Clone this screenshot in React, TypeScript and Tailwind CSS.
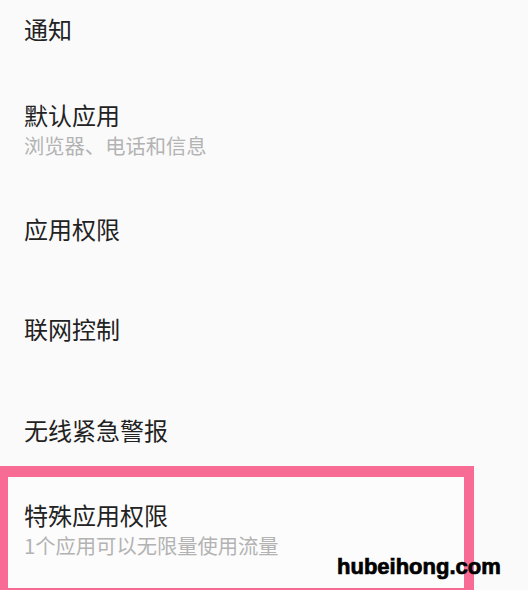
import React from 'react';

const font = { fontFamily: '"Noto Sans CJK SC", "Noto Sans", sans-serif' };

function Row({ title, sub, h }: { title: string; sub?: string; h: string }) {
  return (
    <div className={`flex flex-col justify-center pl-6 ${h}`}>
      <div className="text-[24px] leading-[32px] text-[#222222]">{title}</div>
      {sub && <div className="text-[20.3px] leading-[28px] text-[#b3b3b3]">{sub}</div>}
    </div>
  );
}

export default function App() {
  return (
    <div className="relative h-[590px] w-[528px] overflow-hidden bg-[#fafafa]" style={font}>
      <Row title="通知" h="h-[79px] pb-[21px]" />
      <Row title="默认应用" sub="浏览器、电话和信息" h="h-[100px]" />
      <Row title="应用权限" h="h-[100px]" />
      <Row title="联网控制" h="h-[100px]" />
      <Row title="无线紧急警报" h="h-[87px] pt-[14px]" />
      <div className="w-[474px] border-t-[11px] border-r-[10px] border-b-[2px] border-l-[8px] border-[#f86b95] bg-[#fcfcfc]">
        <div className="flex h-[111px] flex-col pl-4 pt-[22px]">
          <div className="text-[24px] leading-[32px] text-[#222222]">特殊应用权限</div>
          <div className="text-[20.3px] leading-[28px] text-[#b3b3b3]">1个应用可以无限量使用流量</div>
        </div>
      </div>
      <div
        className="absolute left-[337px] top-[556px] text-[22px] font-bold leading-none text-black [-webkit-text-stroke:0.7px_black]"
        style={{ fontFamily: '"Liberation Sans", Arial, sans-serif' }}
      >
        hubeihong.com
      </div>
    </div>
  );
}
